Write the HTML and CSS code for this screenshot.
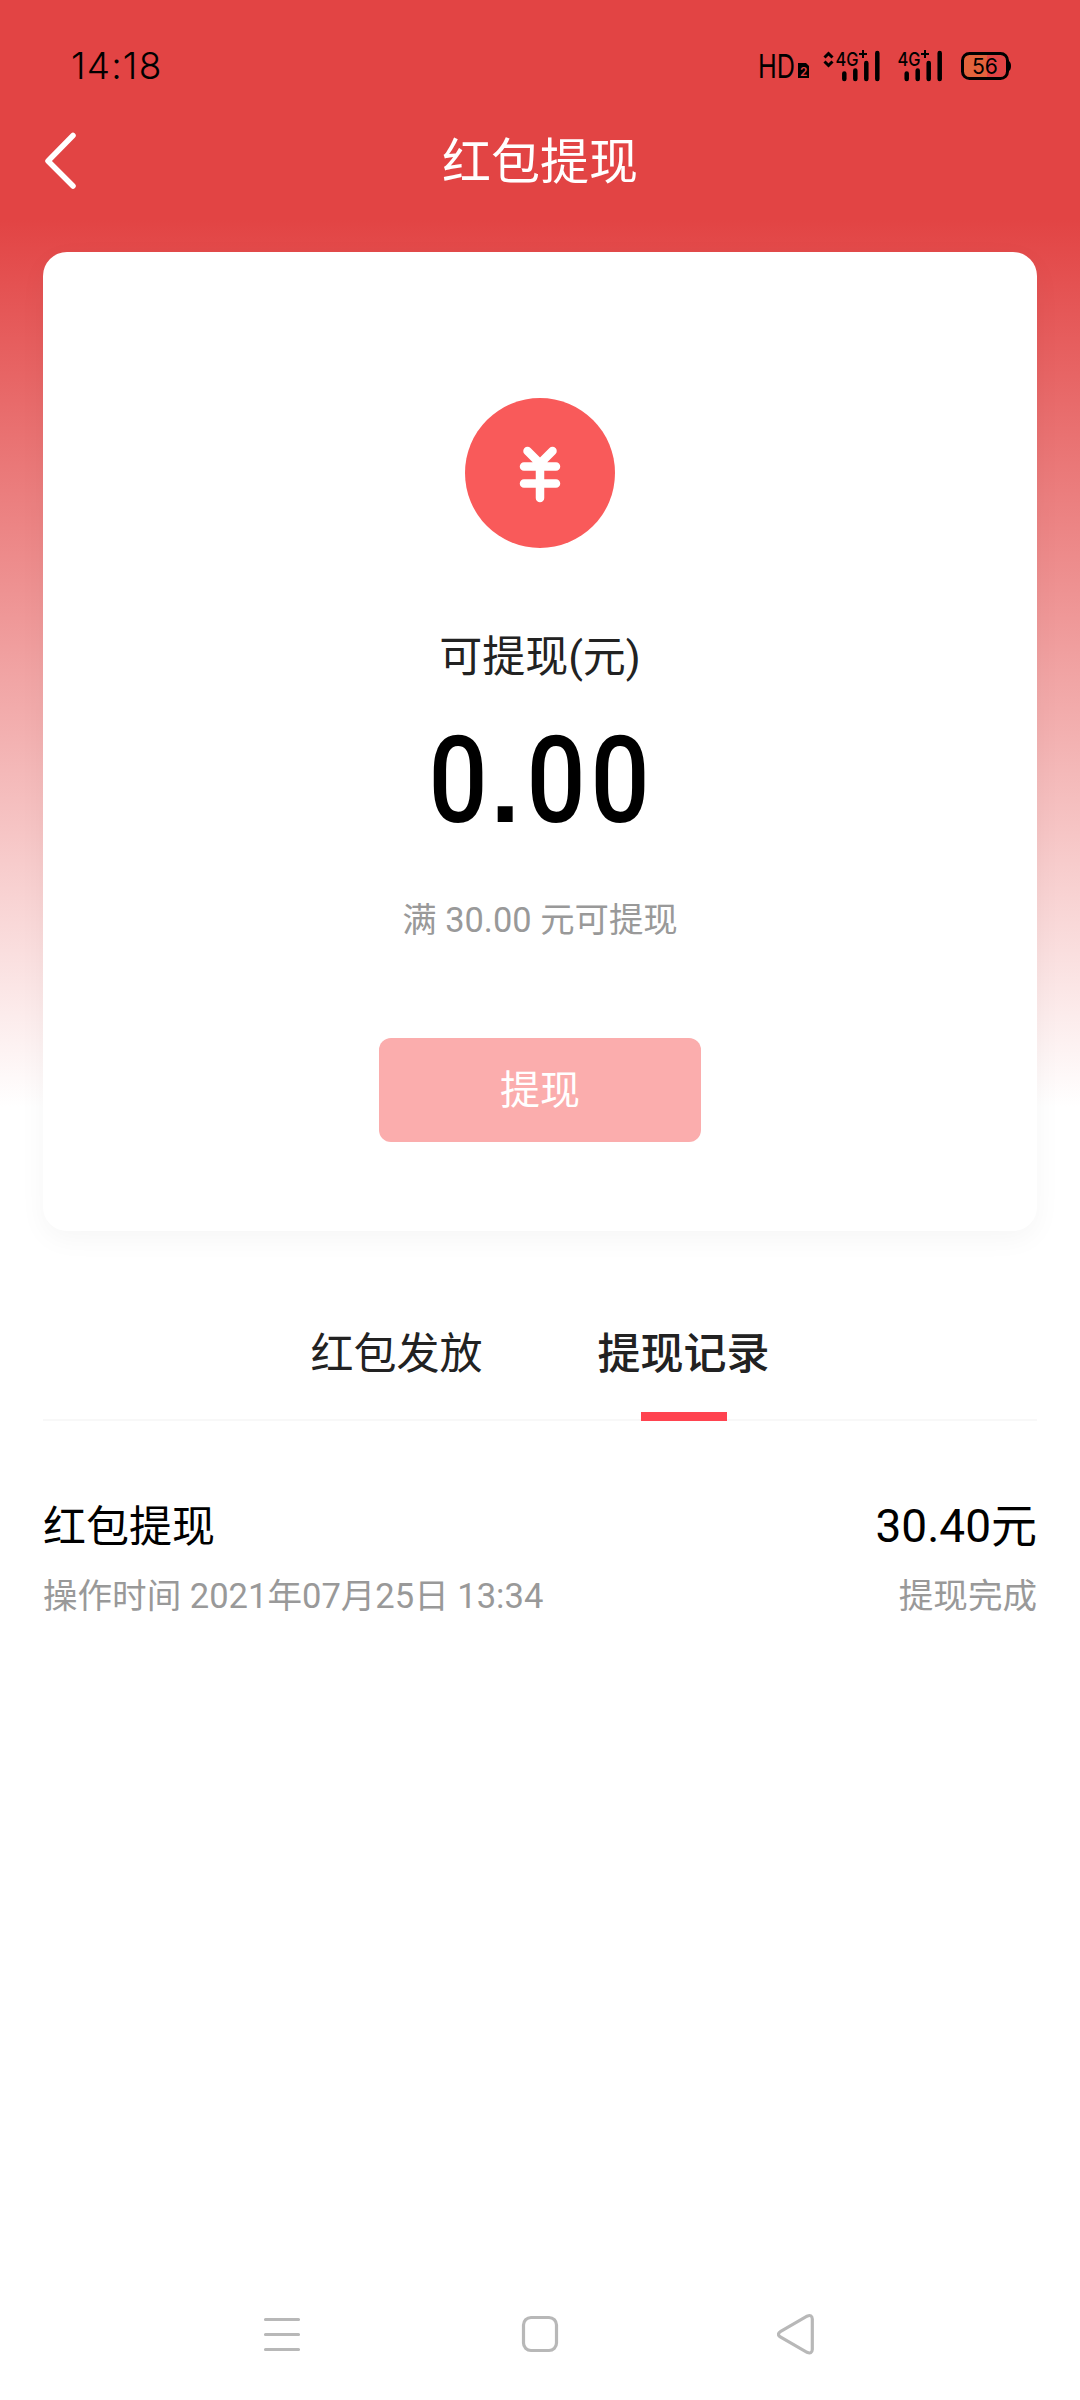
FILE: index.html
```
<!DOCTYPE html>
<html lang="zh-CN">
<head>
<meta charset="utf-8">
<title>红包提现</title>
<link rel="stylesheet" href="styles.css">
</head>
<body>
<div class="page">
  <header class="status">
    <span class="clock">14:18</span>
    <svg class="indicators" width="264" height="40" viewBox="-4 0 264 40">
      <text class="hd" x="-2" y="31.700" textLength="37" lengthAdjust="spacingAndGlyphs">HD</text>
      <path d="M38 17h8l3 3v12H38z"/>
      <text class="sim" x="40" y="29.500">2</text>
      <path class="arrows" d="M64.500 11.500l4-4 4 4M64.500 15.500l4 4 4-4"/>
      <text class="net" x="75.500" y="20" textLength="23" lengthAdjust="spacingAndGlyphs">4G</text>
      <path class="plus" d="M99 8h8M103 4v8"/>
      <path class="bars" d="M84.300 27.500v5.500M95.300 24.500v8.500M106.300 17v16M117.300 7v26"/>
      <text class="net" x="137.500" y="20" textLength="23" lengthAdjust="spacingAndGlyphs">4G</text>
      <path class="plus" d="M161 8h8M165 4v8"/>
      <path class="bars" d="M146.700 27.500v5.500M157.700 24.500v8.500M168.700 17v16M179.700 7v26"/>
      <path class="charge" d="M208 8h19v25h-19q-5 0-5-5V13q0-5 5-5z"/>
      <rect class="battery" x="202.500" y="7.500" width="45" height="25" rx="7"/>
      <path d="M248 14.500q3 1 3 5.500t-3 5.500z"/>
      <text class="level" x="212" y="27.500" textLength="26" lengthAdjust="spacingAndGlyphs">56</text>
    </svg>
  </header>

  <nav class="titlebar">
    <svg class="back" width="40" height="64" viewBox="0 0 40 64"><path d="M30 6.500L5 32l25 25"/></svg>
    <h1 class="title">红包提现</h1>
  </nav>

  <main class="content">
    <section class="card">
      <svg class="coin" width="150" height="150" viewBox="0 0 150 150">
        <circle cx="75" cy="75" r="75"/>
        <path d="M62.500 53L75 65.500 87.500 53M75 65v35M59 68.500h32M59 85.500h32"/>
      </svg>
      <p class="label">可提现(元)</p>
      <p class="balance"><span class="digit">0</span><span class="dot">.</span><span class="digit">0</span><span class="digit">0</span></p>
      <p class="hint">满 30.00 元可提现</p>
      <button class="withdraw">提现</button>
    </section>

    <div class="tabs">
      <span class="tab">红包发放</span>
      <span class="tab active">提现记录</span>
    </div>

    <article class="record">
      <div class="line main"><span>红包提现</span><span class="amount">30.40元</span></div>
      <div class="line sub"><span>操作时间 2021年07月25日 13:34</span><span>提现完成</span></div>
    </article>
  </main>

  <footer class="sysnav">
    <svg width="40" height="50" viewBox="0 0 40 50"><path d="M2.500 9.500h33M2.500 24.500h33M2.500 39.500h33"/></svg>
    <svg width="40" height="50" viewBox="0 0 40 50"><rect x="3.500" y="7.500" width="33" height="33" rx="7.500"/></svg>
    <svg width="40" height="50" viewBox="0 0 40 50"><path d="M3.300 21.700L30 6.200Q35 4 35.300 9V39.500Q35 44.500 30 42.300L3.300 27Q-.5 24.300 3.300 21.700z"/></svg>
  </footer>
</div>
</body>
</html>
```
FILE: styles.css
```
* { box-sizing: border-box; }

body, h1, p { margin: 0; }

body {
  background: #fff;
  font-family: Roboto, "Noto Sans CJK SC", sans-serif;
  color: #222;
}

.page {
  display: flex;
  flex-direction: column;
  width: 1080px;
  height: 2400px;
  background: linear-gradient(#e24444 0, #e24444 220px, #fff 1107px);
}

.status {
  display: flex;
  justify-content: space-between;
  height: 108px;
  padding: 46px 60px 0 71px;
  color: #000;
}

.clock {
  font: 300 37px/40px Inter, sans-serif;
  letter-spacing: 1.200px;
}

.indicators text { font-family: Inter, sans-serif; fill: #000; }
.indicators .hd { font-size: 33px; }
.indicators .sim { font-size: 12px; font-weight: 600; fill: #e24444; }
.indicators .net { font-size: 19px; font-weight: 500; }
.indicators .level { font-size: 22px; }
.arrows { fill: none; stroke: #000; stroke-width: 3; }
.plus { stroke: #000; stroke-width: 2; }
.bars { stroke: #000; stroke-width: 4.500; stroke-linecap: round; }
.charge { fill: #e3633c; }
.battery { fill: none; stroke: #000; stroke-width: 3; }

.titlebar {
  display: grid;
  grid-template-columns: 40px 1fr 40px;
  align-items: center;
  height: 106px;
  padding: 0 43px;
}

.back path {
  fill: none;
  stroke: #fff;
  stroke-width: 5.500;
  stroke-linecap: round;
  stroke-linejoin: round;
}

.title {
  padding-top: 3px;
  color: #fff;
  font-size: 49px;
  font-weight: 400;
  line-height: 70px;
  text-align: center;
}

.content { flex: 1; padding: 38px 43px 0; }

.card {
  display: flex;
  flex-direction: column;
  align-items: center;
  height: 979px;
  padding-top: 146px;
  border-radius: 24px;
  background: #fff;
  box-shadow: 0 8px 28px rgba(0, 0, 0, 0.04);
}

.coin circle { fill: #f95a5a; }
.coin path {
  fill: none;
  stroke: #fff;
  stroke-width: 8.500;
  stroke-linecap: round;
}

.label { margin-top: 77px; font-size: 43px; line-height: 64px; }

.balance {
  display: flex;
  align-items: baseline;
  margin: 27px 5px 0 0;
  font-size: 121px;
  font-weight: 500;
  line-height: 130px;
  color: #000;
}

.digit { width: 64.500px; text-align: center; transform: scaleX(0.86); }
.dot {
  width: 33px;
  font-family: "Liberation Sans", sans-serif;
  font-size: 106px;
  font-weight: 700;
  line-height: 1;
  text-align: center;
}

.hint { margin-top: 49px; font-size: 34.400px; line-height: 50px; color: #999; }

.withdraw {
  width: 322px;
  height: 104px;
  margin-top: 93px;
  padding-top: 3px;
  border: 0;
  border-radius: 12px;
  background: #fbadad;
  color: #fff;
  font: 400 40px/60px Roboto, "Noto Sans CJK SC", sans-serif;
}

.tabs {
  display: flex;
  justify-content: center;
  gap: 115px;
  height: 190px;
  border-bottom: 2px solid #f8f8f8;
  font-size: 43px;
  line-height: 64px;
}

.tab { position: relative; padding-top: 91px; }
.active { font-weight: 500; }
.active::after {
  content: "";
  position: absolute;
  left: 43px;
  bottom: -2px;
  width: 86px;
  height: 9px;
  background: #ff4350;
}

.record { padding-top: 73px; }
.line { display: flex; justify-content: space-between; align-items: baseline; }
.main { height: 77px; font-size: 43px; line-height: 64px; color: #000; }
.amount { font-size: 46px; }
.sub { font-size: 34.550px; line-height: 50px; color: #999; }

.sysnav {
  display: flex;
  justify-content: center;
  gap: 217px;
  height: 90px;
}
.sysnav path, .sysnav rect { fill: none; stroke: #b8b8b8; stroke-width: 3.200; stroke-linecap: round; }
```
